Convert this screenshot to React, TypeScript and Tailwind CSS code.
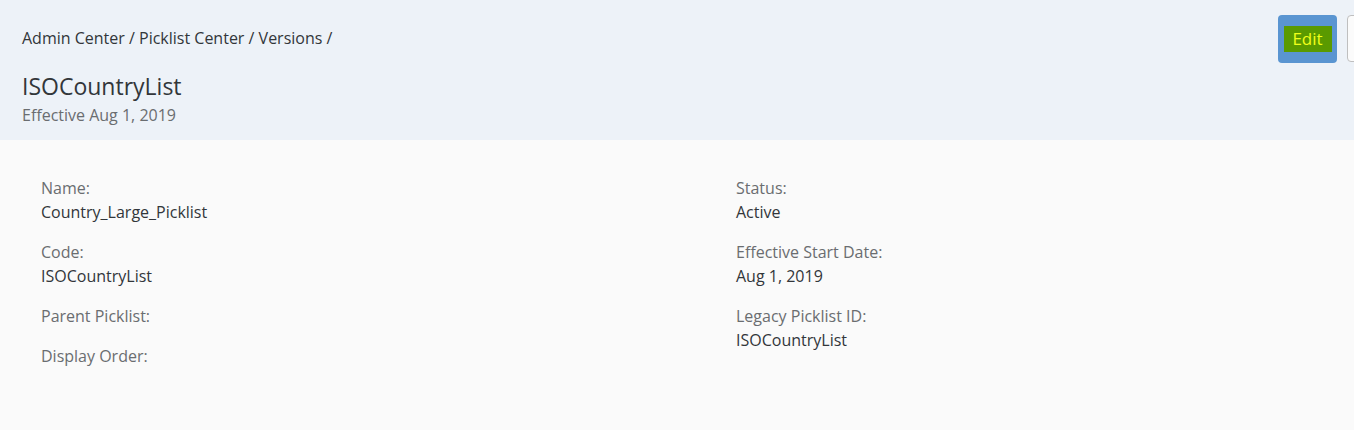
import React from "react";

const Field = ({ label, value }: { label: string; value?: string }) => (
  <div className="flex flex-col">
    <div className="text-[16px] leading-[24px] text-[#6a6d70]">{label}</div>
    {value ? <div className="text-[16px] leading-[24px] text-[#32363a]">{value}</div> : null}
  </div>
);

export default function App() {
  return (
    <div
      className="w-[1354px] h-[430px] overflow-hidden bg-[#fafafa]"
      style={{ fontFamily: '"Open Sans", "Liberation Sans", sans-serif' }}
    >
      <div className="h-[140px] bg-[#edf2f8] flex justify-between pl-[22px] overflow-hidden">
        <div className="flex flex-col pt-[26px]">
          <div className="text-[16px] leading-[24px] text-[#32363a]">
            Admin Center / Picklist Center / Versions /
          </div>
          <div className="mt-[20px] text-[23px] leading-[32px] text-[#32363a]">ISOCountryList</div>
          <div className="mt-[1px] text-[16px] leading-[24px] text-[#6a6d70]">Effective Aug 1, 2019</div>
        </div>
        <div className="flex gap-[10px] pt-[15px] items-start mr-[-30px] shrink-0">
          <button className="w-[59px] h-[48px] rounded-[4px] bg-[#5a95d1] flex items-center justify-center">
            <span className="bg-[#5a9a00] w-[48px] h-[26px] flex items-center justify-center text-[17px] text-[#f0ff1a]">
              Edit
            </span>
          </button>
          <div className="w-[37px] h-[47px] rounded-[4px] border border-[#bfbfbf] bg-[#fbfbfb]" />
        </div>
      </div>
      <div className="flex pt-[36px] pl-[41px]">
        <div className="w-[695px] flex flex-col gap-[16px]">
          <Field label="Name:" value="Country_Large_Picklist" />
          <Field label="Code:" value="ISOCountryList" />
          <Field label="Parent Picklist:" />
          <Field label="Display Order:" />
        </div>
        <div className="flex flex-col gap-[16px]">
          <Field label="Status:" value="Active" />
          <Field label="Effective Start Date:" value="Aug 1, 2019" />
          <Field label="Legacy Picklist ID:" value="ISOCountryList" />
        </div>
      </div>
    </div>
  );
}
